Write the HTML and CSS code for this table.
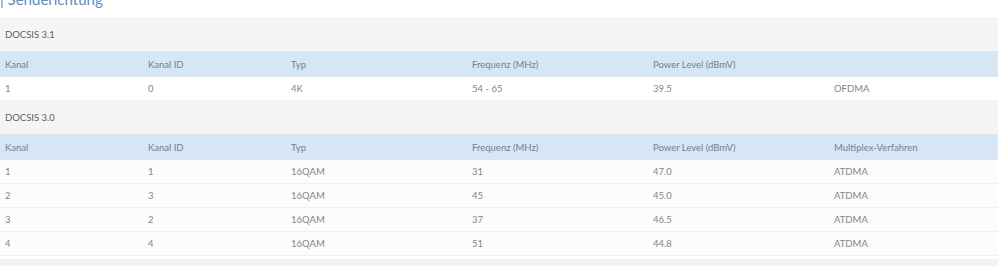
FILE: index.html
```html
<!DOCTYPE html>
<html>
<head>
<meta charset="utf-8">
<link rel="stylesheet" href="styles.css">
</head>
<body>
<div class="title-wrap"><h2 class="title">| Senderichtung</h2></div>
<div class="section">DOCSIS 3.1</div>
<div class="row head">
  <div>Kanal</div><div>Kanal ID</div><div>Typ</div><div>Frequenz (MHz)</div><div>Power Level (dBmV)</div><div></div>
</div>
<div class="row data white">
  <div>1</div><div>0</div><div>4K</div><div>54 - 65</div><div>39.5</div><div>OFDMA</div>
</div>
<div class="section">DOCSIS 3.0</div>
<div class="row head">
  <div>Kanal</div><div>Kanal ID</div><div>Typ</div><div>Frequenz (MHz)</div><div>Power Level (dBmV)</div><div>Multiplex-Verfahren</div>
</div>
<div class="row data">
  <div>1</div><div>1</div><div>16QAM</div><div>31</div><div>47.0</div><div>ATDMA</div>
</div>
<div class="row data">
  <div>2</div><div>3</div><div>16QAM</div><div>45</div><div>45.0</div><div>ATDMA</div>
</div>
<div class="row data">
  <div>3</div><div>2</div><div>16QAM</div><div>37</div><div>46.5</div><div>ATDMA</div>
</div>
<div class="row data">
  <div>4</div><div>4</div><div>16QAM</div><div>51</div><div>44.8</div><div>ATDMA</div>
</div>
<div class="foot"></div>
</body>
</html>
```
FILE: styles.css
```css
html, body {
  margin: 0;
  padding: 0;
  background: #ffffff;
  font-family: "Lato", "Liberation Sans", sans-serif;
  font-size: 9.5px;
  overflow: hidden;
}
body {
  width: 998px;
}
.title-wrap {
  height: 17px;
  overflow: hidden;
}
.title {
  margin: -11px 0 0 0;
  font-weight: 400;
  font-size: 15px;
  line-height: 20px;
  color: #5590c6;
}
.section {
  height: 34px;
  background: #f6f5f3;
  color: #5e5e5e;
  display: flex;
  align-items: center;
  padding-left: 5px;
}
.row {
  display: grid;
  grid-template-columns: 143px 143px 181px 181px 181px 169px;
  align-items: center;
}
.row > div {
  padding-left: 5px;
}
.head {
  height: 26px;
  background: #d7e6f4;
  color: #73808e;
}
.data {
  height: 23px;
  border-bottom: 1px solid #efefef;
  background: #fcfcfc;
  color: #858585;
}
.data.white {
  height: 23px;
  border-bottom: none;
  background: #ffffff;
}
.foot {
  margin-top: 3px;
  height: 10px;
  background: #f3f3f3;
}
```
